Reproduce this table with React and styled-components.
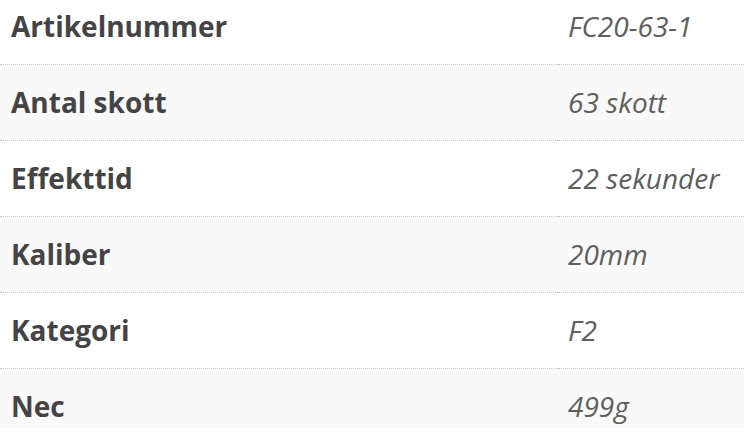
import React from 'react';
import styled, { createGlobalStyle } from 'styled-components';

const GlobalStyle = createGlobalStyle`
  html, body {
    margin: 0;
    padding: 0;
    background: #ffffff;
    overflow: hidden;
  }
  body {
    font-family: 'Open Sans', 'Liberation Sans', sans-serif;
  }
`;

const SpecPanel = styled.div`
  height: 428px;
  overflow: hidden;
`;

const SpecTable = styled.table`
  width: 100%;
  border-collapse: collapse;
  margin-top: -12px;
`;

const Row = styled.tr`
  background: ${(props) => (props.$striped ? '#f9f9f9' : '#ffffff')};
  border-top: ${(props) => (props.$first ? 'none' : '1px dotted #c8c8c8')};
`;

const Label = styled.th`
  width: 75%;
  height: 76px;
  box-sizing: border-box;
  padding: 0 11px;
  text-align: left;
  vertical-align: middle;
  font-weight: 700;
  font-size: 28px;
  color: #444444;
`;

const Value = styled.td`
  padding: 0 10px;
  text-align: left;
  vertical-align: middle;
  font-style: italic;
  font-weight: 400;
  font-size: 28px;
  color: #5e5e5e;
`;

const specs = [
  ['Artikelnummer', 'FC20-63-1'],
  ['Antal skott', '63 skott'],
  ['Effekttid', '22 sekunder'],
  ['Kaliber', '20mm'],
  ['Kategori', 'F2'],
  ['Nec', '499g'],
];

export default function App() {
  return (
    <>
      <GlobalStyle />
      <SpecPanel>
        <SpecTable>
          <tbody>
            {specs.map(([name, value], i) => (
              <Row key={name} $striped={i % 2 === 1} $first={i === 0}>
                <Label>{name}</Label>
                <Value>{value}</Value>
              </Row>
            ))}
          </tbody>
        </SpecTable>
      </SpecPanel>
    </>
  );
}
